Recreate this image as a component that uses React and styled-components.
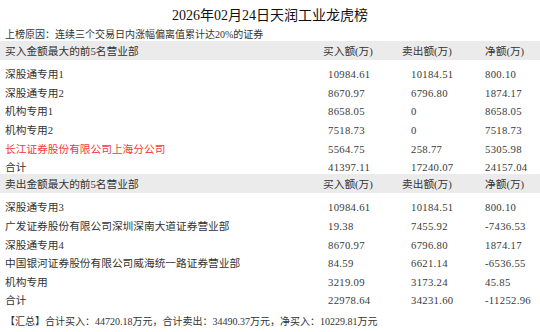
import React from "react";
import styled, { createGlobalStyle } from "styled-components";

const Global = createGlobalStyle`
  html, body { margin: 0; padding: 0; background: #fff; }
  body {
    font-family: "Liberation Serif", "Noto Sans CJK SC", serif;
    color: #333;
    -webkit-font-smoothing: antialiased;
  }
`;

const Page = styled.div`
  width: 540px;
  height: 332px;
  overflow: hidden;
  display: flex;
  flex-direction: column;
`;

const Title = styled.h1`
  margin: 0;
  padding-top: 4px;
  height: 28px;
  box-sizing: border-box;
  line-height: 24px;
  font-size: 14px;
  font-weight: 400;
  color: #111;
  text-align: center;
`;

const Reason = styled.div`
  height: 13px;
  line-height: 13px;
  font-size: 10px;
  padding-left: 5px;
  color: #333;
`;

const cols = `318px 79px 83px 1fr`;

const Band = styled.div`
  display: grid;
  grid-template-columns: ${cols};
  height: 19px;
  box-sizing: border-box;
  padding: 2px 5px 0;
  line-height: 17px;
  font-size: 10.7px;
  background: #ebebeb;
  color: #333;
`;

const BandTitle = styled.div`
  white-space: nowrap;
`;

const ColHead = styled.div`
  white-space: nowrap;
  padding-left: ${(p) => p.$indent || 0}px;
`;

const Rows = styled.div`
  padding-top: 2.3px;
  display: flex;
  flex-direction: column;
`;

const Row = styled.div`
  display: grid;
  grid-template-columns: ${cols};
  height: 18.67px;
  box-sizing: border-box;
  padding: 4.67px 5px 0;
  line-height: 14px;
  font-size: 10.7px;
`;

const Name = styled.div`
  white-space: nowrap;
  color: ${(p) => (p.$hot ? "#f2383a" : "#333")};
`;

const Num = styled.div`
  white-space: nowrap;
  padding-left: ${(p) => p.$indent || 0}px;
  letter-spacing: 0.3px;
  color: #3a3a3a;
`;

const Summary = styled.div`
  margin-top: 7.4px;
  padding-left: 5px;
  line-height: 14px;
  font-size: 10px;
  color: #333;
  white-space: nowrap;
`;

const buy = [
  ["深股通专用1", "10984.61", "10184.51", "800.10"],
  ["深股通专用2", "8670.97", "6796.80", "1874.17"],
  ["机构专用1", "8658.05", "0", "8658.05"],
  ["机构专用2", "7518.73", "0", "7518.73"],
  ["长江证券股份有限公司上海分公司", "5564.75", "258.77", "5305.98", true],
  ["合计", "41397.11", "17240.07", "24157.04"],
];

const sell = [
  ["深股通专用3", "10984.61", "10184.51", "800.10"],
  ["广发证券股份有限公司深圳深南大道证券营业部", "19.38", "7455.92", "-7436.53"],
  ["深股通专用4", "8670.97", "6796.80", "1874.17"],
  ["中国银河证券股份有限公司威海统一路证券营业部", "84.59", "6621.14", "-6536.55"],
  ["机构专用", "3219.09", "3173.24", "45.85"],
  ["合计", "22978.64", "34231.60", "-11252.96"],
];

function Section({ title, rows }) {
  return (
    <>
      <Band>
        <BandTitle>{title}</BandTitle>
        <ColHead>买入额(万)</ColHead>
        <ColHead>卖出额(万)</ColHead>
        <ColHead>净额(万)</ColHead>
      </Band>
      <Rows>
        {rows.map(([name, a, b, c, hot], i) => (
          <Row key={i}>
            <Name $hot={hot}>{name}</Name>
            <Num $indent={5}>{a}</Num>
            <Num $indent={9}>{b}</Num>
            <Num>{c}</Num>
          </Row>
        ))}
      </Rows>
    </>
  );
}

export default function App() {
  return (
    <>
      <Global />
      <Page>
        <Title>2026年02月24日天润工业龙虎榜</Title>
        <Reason>上榜原因：连续三个交易日内涨幅偏离值累计达20%的证券</Reason>
        <Section title="买入金额最大的前5名营业部" rows={buy} />
        <Section title="卖出金额最大的前5名营业部" rows={sell} />
        <Summary>
          【汇总】合计买入：44720.18万元，合计卖出：34490.37万元，净买入：10229.81万元
        </Summary>
      </Page>
    </>
  );
}
